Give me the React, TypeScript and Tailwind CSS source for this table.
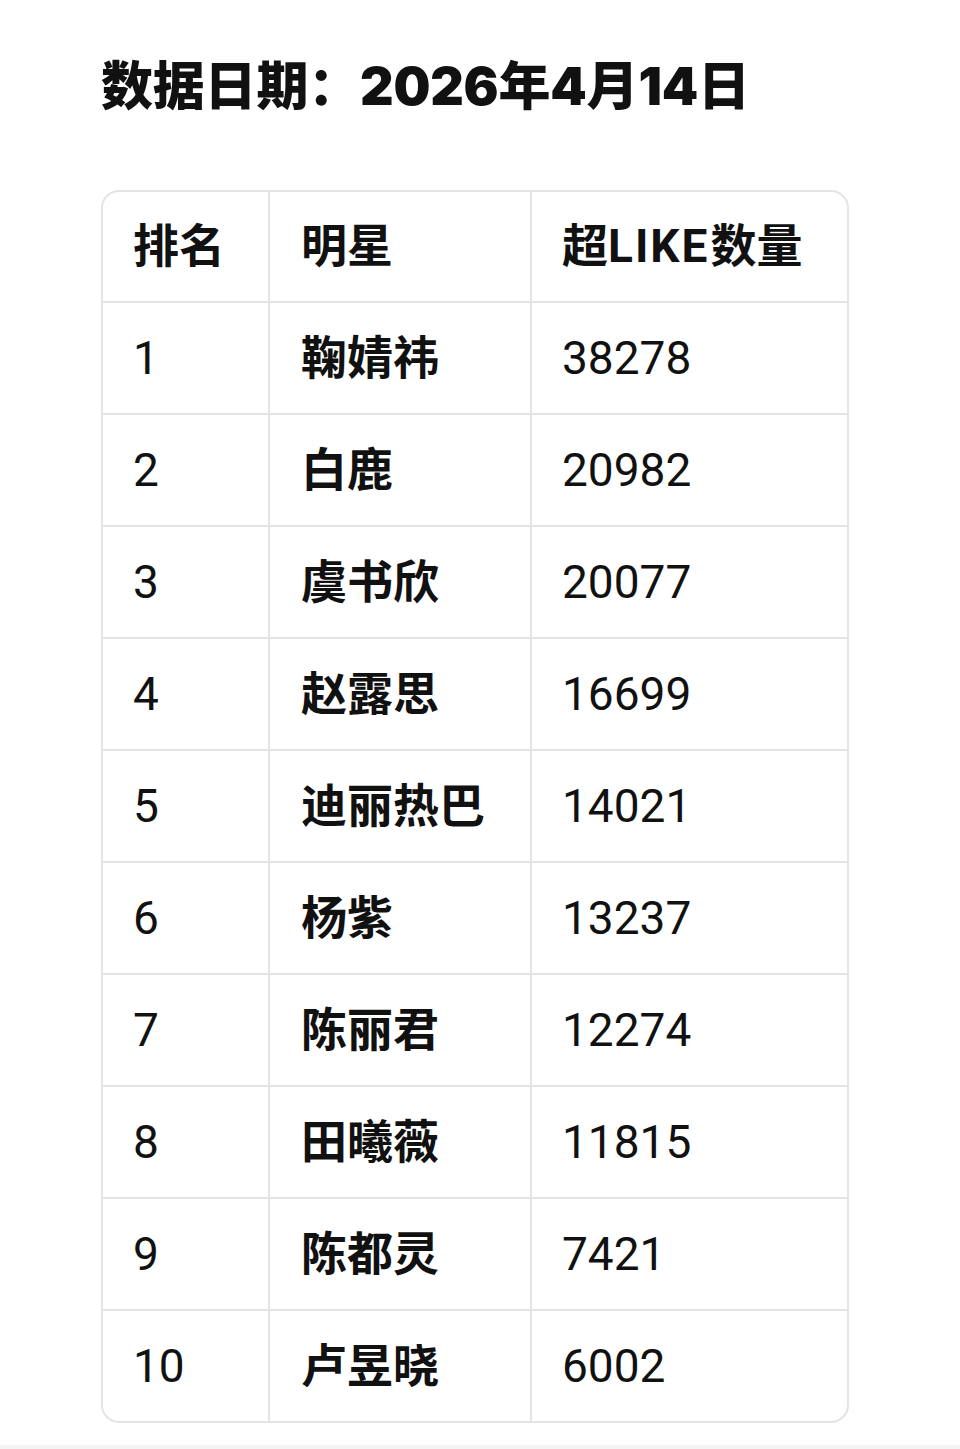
import React from "react";

const rows = [
  { rank: 1, name: "鞠婧祎", count: 38278 },
  { rank: 2, name: "白鹿", count: 20982 },
  { rank: 3, name: "虞书欣", count: 20077 },
  { rank: 4, name: "赵露思", count: 16699 },
  { rank: 5, name: "迪丽热巴", count: 14021 },
  { rank: 6, name: "杨紫", count: 13237 },
  { rank: 7, name: "陈丽君", count: 12274 },
  { rank: 8, name: "田曦薇", count: 11815 },
  { rank: 9, name: "陈都灵", count: 7421 },
  { rank: 10, name: "卢昱晓", count: 6002 },
];

export default function App() {
  return (
    <div className="min-h-[1449px] w-[960px] bg-white text-[#111] flex flex-col font-['Roboto','Noto_Sans_CJK_SC',sans-serif]">
      <div className="h-[190px] pl-[101px] pt-[59px]">
        <h1 className="text-[52px] leading-[56px] font-black tracking-[-0.2px] font-['Inter','Noto_Sans_CJK_SC',sans-serif]">
          数据日期：2026年4月14日
        </h1>
      </div>

      {/* ranking table */}
      <div className="ml-[101px] w-[748px] rounded-[18px] border-2 border-[#e4e4e4] overflow-hidden">
        <div className="grid grid-cols-[165px_262px_1fr] h-[109px] items-stretch">
          <div className="flex items-center pl-[30px] text-[46px] font-bold">排名</div>
          <div className="flex items-center pl-[31px] text-[46px] font-bold border-l-2 border-[#e4e4e4]">明星</div>
          <div className="flex items-center pl-[30px] text-[46px] font-bold border-l-2 border-[#e4e4e4]">
            超<span className="tracking-[2px] mr-[1px]">LIKE</span>数量
          </div>
        </div>
        {rows.map((r) => (
          <div
            key={r.rank}
            className="grid grid-cols-[165px_262px_1fr] h-[112px] border-t-2 border-[#e4e4e4]"
          >
            <div className="flex items-center pl-[30px] text-[46px]">{r.rank}</div>
            <div className="flex items-center pl-[31px] text-[46px] font-bold border-l-2 border-[#e4e4e4]">
              {r.name}
            </div>
            <div className="flex items-center pl-[30px] text-[46px] border-l-2 border-[#e4e4e4]">
              {r.count}
            </div>
          </div>
        ))}
      </div>
      <div className="flex-1" />
      <div className="h-[4px] bg-[#f4f4f4]" />
    </div>
  );
}
